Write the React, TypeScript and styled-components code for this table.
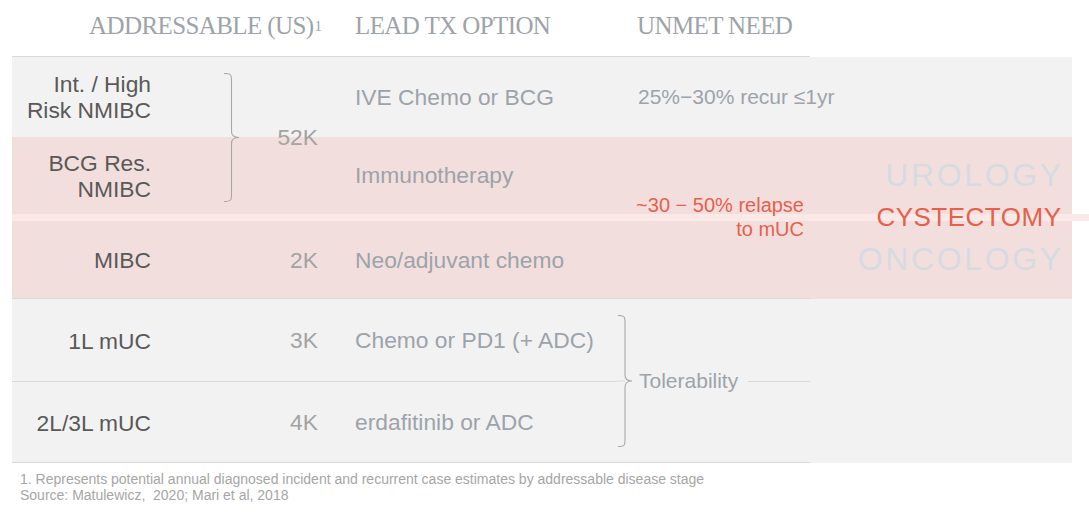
import React from "react";
import styled, { createGlobalStyle, css } from "styled-components";

const Global = createGlobalStyle`
  html, body { margin: 0; padding: 0; background: #ffffff; }
  body { font-family: "Liberation Sans", Arial, sans-serif; }
`;

const Page = styled.div`
  width: 1089px;
  height: 515px;
  overflow: hidden;
  position: relative;
`;

const Table = styled.div`
  display: grid;
  margin-left: 12px;
  width: 1060px;
  grid-template-columns: 139px 72px 18px 77px 37px 262px 20px 173px 251px 11px;
  grid-template-rows: 57px 80px 77px 7px 78px 83px 81px;
`;

type Tone = "gray" | "pink" | "strip";
const toneColor: Record<Tone, string> = {
  gray: "#f2f2f2",
  pink: "#f2dfdd",
  strip: "#fbe9e7",
};

const Band = styled.div<{ $row: number; $tone: Tone }>`
  grid-column: 1 / -1;
  grid-row: ${(p) => p.$row};
  background: ${(p) => toneColor[p.$tone]};
  ${(p) =>
    p.$tone === "strip" &&
    css`
      margin-right: -17px;
    `}
`;

const Rule = styled.div<{ $row: number; $to: number }>`
  grid-row: ${(p) => p.$row};
  grid-column: 1 / ${(p) => p.$to};
  align-self: end;
  height: 1px;
  background: #d9d9d9;
`;

const HeadCell = styled.div<{ $col: string; $end?: boolean }>`
  grid-row: 1;
  grid-column: ${(p) => p.$col};
  display: flex;
  align-items: center;
  justify-content: ${(p) => (p.$end ? "flex-end" : "flex-start")};
  margin-right: ${(p) => (p.$end ? "-4px" : "0")};
  padding-bottom: 5px;
  font-family: "Liberation Serif", "Times New Roman", serif;
  font-size: 25px;
  letter-spacing: -0.6px;
  color: #9ea3a9;
  white-space: nowrap;
`;

const Sup = styled.span`
  font-size: 15px;
  vertical-align: 9px;
  margin-left: 1px;
  letter-spacing: 0;
`;

const Cell = styled.div<{ $row: string }>`
  grid-row: ${(p) => p.$row};
  display: flex;
  align-items: center;
  white-space: nowrap;
`;

const Label = styled(Cell)`
  grid-column: 1;
  justify-content: flex-end;
  text-align: right;
  font-size: 22.8px;
  line-height: 26px;
  color: #595959;
`;

const Count = styled(Cell)<{ $shift?: number }>`
  grid-column: 4;
  justify-content: flex-end;
  font-size: 22.8px;
  color: #a3a3a3;
  padding-top: ${(p) => p.$shift ?? 0}px;
`;

const Option = styled(Cell)`
  grid-column: 6;
  font-size: 22.8px;
  color: #9da3aa;
`;

const Need = styled(Cell)`
  grid-column: 8;
  padding-left: 1px;
  font-size: 21px;
  color: #9da3aa;
`;

const Relapse = styled.div`
  grid-column: 8;
  grid-row: 3 / 6;
  display: flex;
  flex-direction: column;
  justify-content: center;
  align-items: flex-end;
  padding-right: 6px;
  padding-bottom: 2px;
  font-size: 20px;
  line-height: 24px;
  color: #e8604c;
  white-space: nowrap;
`;

const Stamp = styled.div`
  grid-column: 9;
  grid-row: 3 / 6;
  display: flex;
  flex-direction: column;
  justify-content: center;
  align-items: flex-end;
  padding-bottom: 2px;
`;

const StampWord = styled.span<{ $accent?: boolean }>`
  font-size: ${(p) => (p.$accent ? "26px" : "32px")};
  letter-spacing: ${(p) => (p.$accent ? "0.5px" : "2.6px")};
  margin-right: ${(p) => (p.$accent ? "-0.5px" : "-2.6px")};
  line-height: 42px;
  color: ${(p) => (p.$accent ? "#e8604c" : "#d5dbe1")};
  white-space: nowrap;
`;

const BraceCell = styled.div<{ $col: number; $row: string; $shift: number }>`
  grid-column: ${(p) => p.$col};
  grid-row: ${(p) => p.$row};
  display: flex;
  align-items: center;
  padding-top: ${(p) => p.$shift}px;
`;

const Tolerance = styled.div`
  grid-column: 8;
  grid-row: 6 / 8;
  display: flex;
  align-items: center;
  padding-left: 2px;
  font-size: 21px;
  color: #9da3aa;
  white-space: nowrap;
`;

const TailLine = styled.div`
  flex: 1;
  height: 1px;
  margin-left: 10px;
  margin-top: 1px;
  background: #d9d9d9;
`;

const Foot = styled.div`
  margin: 8px 0 0 20px;
  font-size: 14px;
  line-height: 16px;
  color: #a6a6a6;
`;

function Brace({
  w,
  h,
  mid,
  tip,
  lead,
}: {
  w: number;
  h: number;
  mid: number;
  tip: number;
  lead?: boolean;
}) {
  const c = h / 2;
  const d = `M1 0.5 C${mid} 0.5 ${mid} 2 ${mid} 8 L${mid} ${c - 6} C${mid} ${c - 1} ${tip - 3} ${c} ${tip} ${c} C${tip - 3} ${c} ${mid} ${c + 1} ${mid} ${c + 6} L${mid} ${h - 8} C${mid} ${h - 2} ${mid} ${h - 0.5} 1 ${h - 0.5}`;
  return (
    <svg width={w} height={h} viewBox={`0 0 ${w} ${h}`} fill="none">
      {lead && <line x1="0" y1={c} x2={mid} y2={c} stroke="#d9d9d9" strokeWidth="1" />}
      <path d={d} stroke="#a8a8a8" strokeWidth="1.1" />
    </svg>
  );
}

export default function App() {
  return (
    <Page>
      <Global />
      <Table>
        <Band $row={2} $tone="gray" />
        <Band $row={3} $tone="pink" />
        <Band $row={4} $tone="strip" />
        <Band $row={5} $tone="pink" />
        <Band $row={6} $tone="gray" />
        <Band $row={7} $tone="gray" />

        <Rule $row={1} $to={9} />
        <Rule $row={5} $to={9} />
        <Rule $row={6} $to={7} />
        <Rule $row={7} $to={9} />

        <HeadCell $col="1 / 5" $end>
          ADDRESSABLE (US)<Sup>1</Sup>
        </HeadCell>
        <HeadCell $col="6">LEAD TX OPTION</HeadCell>
        <HeadCell $col="8 / 10">UNMET NEED</HeadCell>

        <Label $row="2">
          Int. / High
          <br />
          Risk NMIBC
        </Label>
        <Label $row="3">
          BCG Res.
          <br />
          NMIBC
        </Label>
        <Label $row="5">MIBC</Label>
        <Label $row="6">1L mUC</Label>
        <Label $row="7">2L/3L mUC</Label>

        <BraceCell $col={3} $row="2 / 4" $shift={4}>
          <Brace w={18} h={129} mid={8.5} tip={16} />
        </BraceCell>
        <BraceCell $col={7} $row="6 / 8" $shift={0}>
          <Brace w={20} h={132} mid={8} tip={15} lead />
        </BraceCell>

        <Count $row="2 / 4" $shift={4}>52K</Count>
        <Count $row="5">2K</Count>
        <Count $row="6">3K</Count>
        <Count $row="7">4K</Count>

        <Option $row="2">IVE Chemo or BCG</Option>
        <Option $row="3">Immunotherapy</Option>
        <Option $row="5">Neo/adjuvant chemo</Option>
        <Option $row="6">Chemo or PD1 (+ ADC)</Option>
        <Option $row="7">erdafitinib or ADC</Option>

        <Need $row="2">25%−30% recur ≤1yr</Need>

        <Relapse>
          <span>~30 − 50% relapse</span>
          <span>to mUC</span>
        </Relapse>

        <Stamp>
          <StampWord>UROLOGY</StampWord>
          <StampWord $accent>CYSTECTOMY</StampWord>
          <StampWord>ONCOLOGY</StampWord>
        </Stamp>

        <Tolerance>
          Tolerability
          <TailLine />
        </Tolerance>
      </Table>
      <Foot>
        1. Represents potential annual diagnosed incident and recurrent case estimates by addressable disease stage
        <br />
        Source: Matulewicz,&nbsp; 2020; Mari et al, 2018
      </Foot>
    </Page>
  );
}
